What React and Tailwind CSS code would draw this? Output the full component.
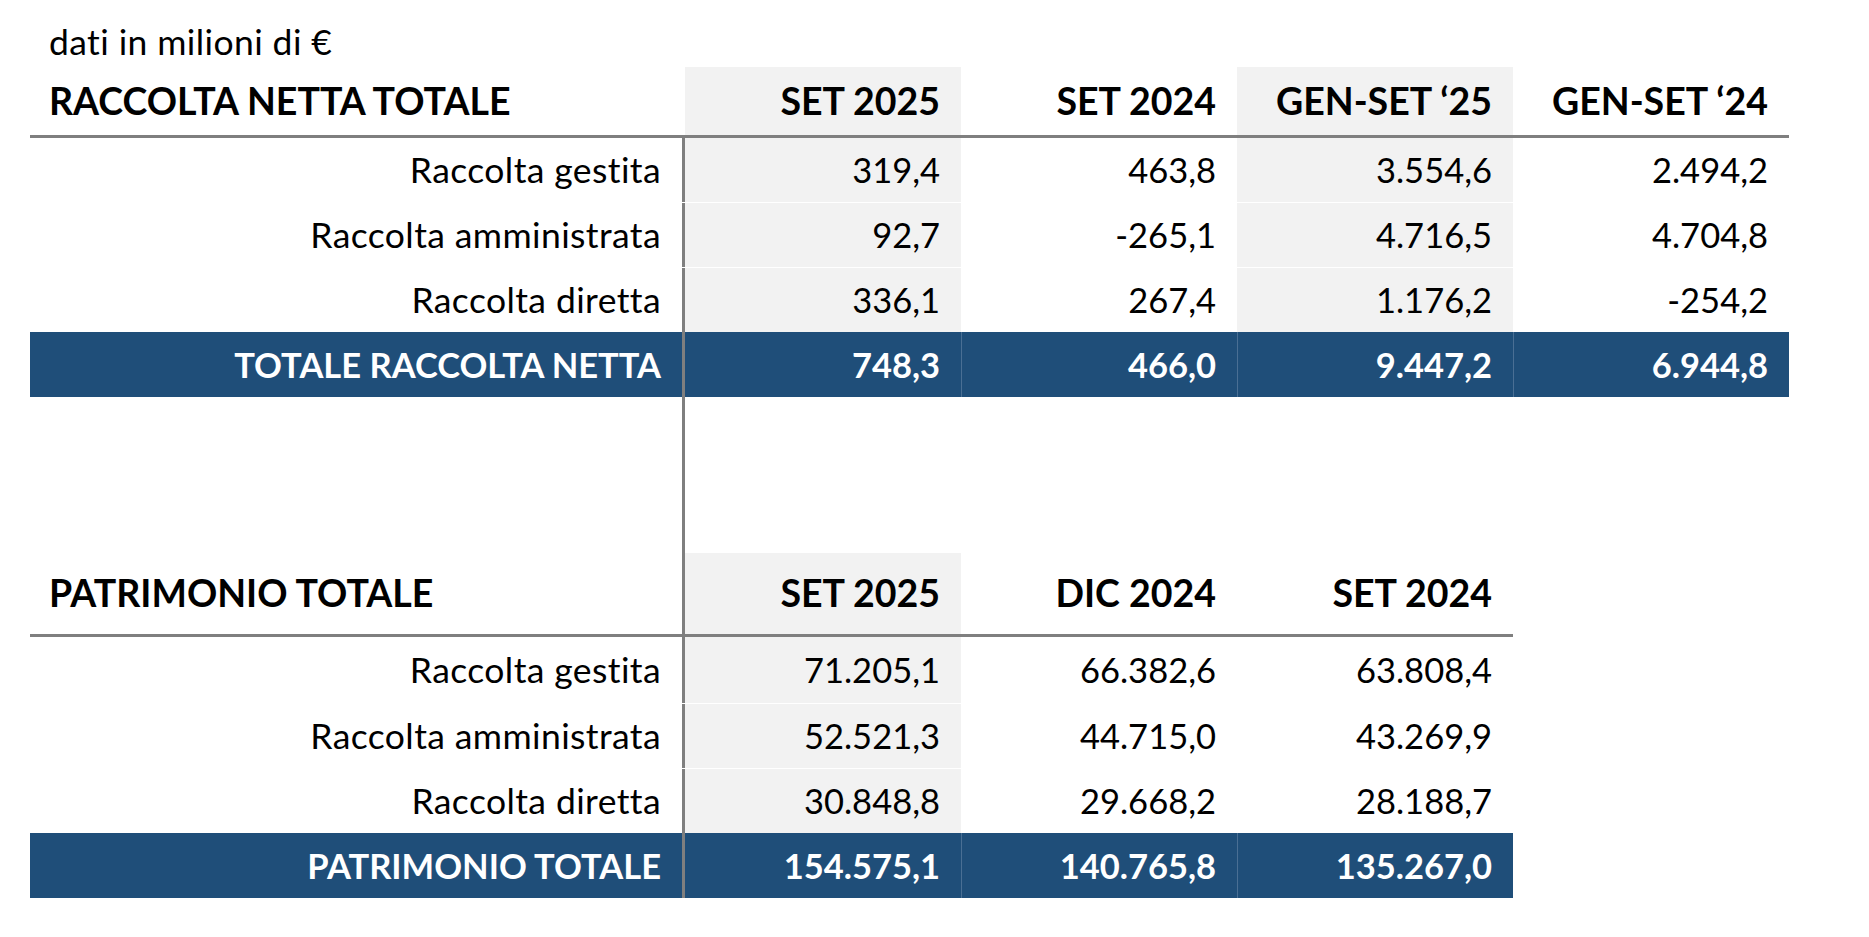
// App.jsx — tabelle raccolta netta e patrimonio totale (dati in milioni di €)

const raccolta = {
  cols: ["SET 2025", "SET 2024", "GEN-SET ‘25", "GEN-SET ‘24"],
  shaded: [true, false, true, false],
  rows: [
    ["Raccolta gestita", "319,4", "463,8", "3.554,6", "2.494,2"],
    ["Raccolta amministrata", "92,7", "-265,1", "4.716,5", "4.704,8"],
    ["Raccolta diretta", "336,1", "267,4", "1.176,2", "-254,2"],
  ],
  total: ["TOTALE RACCOLTA NETTA", "748,3", "466,0", "9.447,2", "6.944,8"],
};

const patrimonio = {
  cols: ["SET 2025", "DIC 2024", "SET 2024"],
  shaded: [true, false, false],
  rows: [
    ["Raccolta gestita", "71.205,1", "66.382,6", "63.808,4"],
    ["Raccolta amministrata", "52.521,3", "44.715,0", "43.269,9"],
    ["Raccolta diretta", "30.848,8", "29.668,2", "28.188,7"],
  ],
  total: ["PATRIMONIO TOTALE", "154.575,1", "140.765,8", "135.267,0"],
};

function Table({ title, data, headerH, rowHs, divideHeader }) {
  return (
    <div className="flex flex-col w-max">
      {/* header */}
      <div className={`flex ${headerH} border-b-[3px] border-[#7f7f7f]`}>
        <div
          className={`w-[655px] shrink-0 flex items-center pl-[19px] text-[37.5px] font-bold ${
            divideHeader ? "border-r-[3px] border-[#7f7f7f]" : ""
          }`}
        >
          {title}
        </div>
        {data.cols.map((c, i) => (
          <div
            key={c}
            className={`w-[276px] shrink-0 flex items-center justify-end pr-[21px] text-[37.5px] font-bold ${
              data.shaded[i] ? "bg-[#f2f2f2]" : ""
            }`}
          >
            {c}
          </div>
        ))}
      </div>

      {/* body rows */}
      {data.rows.map((r, ri) => (
        <div
          key={r[0]}
          className={`flex ${rowHs[ri]} ${ri > 0 ? "border-t border-white" : ""}`}
        >
          <div className="w-[655px] shrink-0 flex items-center justify-end pr-[21px] border-r-[3px] border-[#7f7f7f] text-[35.5px] tracking-[0.4px]">
            {r[0]}
          </div>
          {r.slice(1).map((v, i) => (
            <div
              key={i}
              className={`w-[276px] shrink-0 flex items-center justify-end pr-[21px] text-[34.5px] ${
                data.shaded[i] ? "bg-[#f2f2f2]" : ""
              }`}
            >
              {v}
            </div>
          ))}
        </div>
      ))}

      {/* total */}
      <div className="flex h-[65px] bg-[#1f4e79] text-white font-bold text-[34.5px]">
        <div className="w-[655px] shrink-0 flex items-center justify-end pr-[21px] border-r-[3px] border-[#7f7f7f]">
          {data.total[0]}
        </div>
        {data.total.slice(1).map((v, i) => (
          <div
            key={i}
            className={`w-[276px] shrink-0 flex items-center justify-end pr-[21px] ${
              i > 0 ? "border-l border-[#4a6f94]" : ""
            }`}
          >
            {v}
          </div>
        ))}
      </div>
    </div>
  );
}

export default function App() {
  return (
    <div className="min-h-screen bg-white text-black font-['Lato',sans-serif] pl-[30px] pt-[21px]">
      <div className="pl-[19px] text-[35.5px] tracking-[0.4px] leading-[41px]">dati in milioni di €</div>

      <div className="mt-[5px]">
        <Table
          title="RACCOLTA NETTA TOTALE"
          data={raccolta}
          headerH="h-[71px]"
          rowHs={["h-[64px]", "h-[65px]", "h-[65px]"]}
          divideHeader={false}
        />
      </div>

      {/* spacer between the two tables, the divider keeps running */}
      <div className="flex h-[156px]">
        <div className="w-[655px] shrink-0 border-r-[3px] border-[#7f7f7f]" />
      </div>

      <Table
        title="PATRIMONIO TOTALE"
        data={patrimonio}
        headerH="h-[84px]"
        rowHs={["h-[66px]", "h-[65px]", "h-[65px]"]}
        divideHeader={true}
      />
    </div>
  );
}
